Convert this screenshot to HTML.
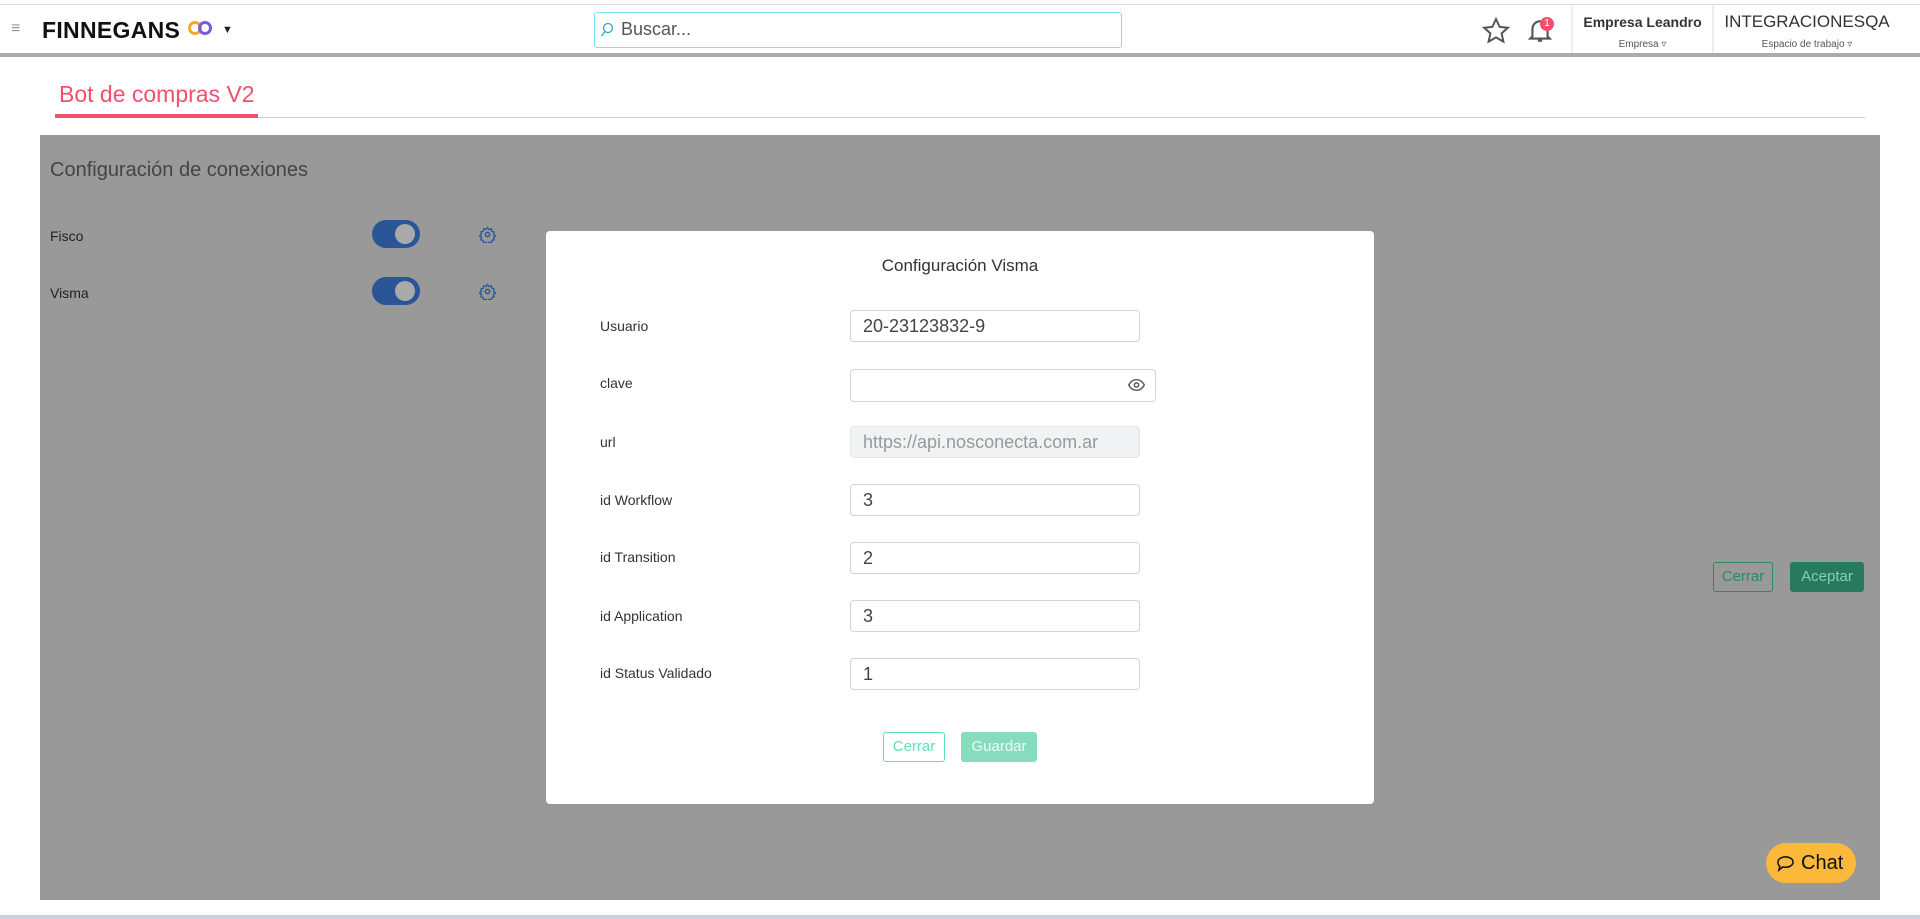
<!DOCTYPE html>
<html><head><meta charset="utf-8"><style>
*{box-sizing:border-box;margin:0;padding:0}
body{width:1920px;height:919px;background:#fff;font-family:"Liberation Sans",sans-serif;position:relative;overflow:hidden;color:#333}
.a{position:absolute}
.lbl{position:absolute;left:600px;font-size:14px;color:#333}
.inp{position:absolute;left:850px;width:290px;height:32px;border:1px solid #cfd3d8;border-radius:4px;background:#fff;font-size:18px;color:#444;padding:4px 12px;line-height:22px}
</style></head><body>
<div class="a" style="left:0;top:4px;width:1920px;height:1px;background:#ddd"></div>
<div class="a" style="left:0;top:53px;width:1920px;height:4px;background:#a9abb0"></div>
<div class="a" style="left:11px;top:20px;font-size:16px;color:#999">≡</div>
<div class="a" style="left:42px;top:17px;font-size:23px;font-weight:bold;color:#111;letter-spacing:0.3px">FINNEGANS</div>
<div class="a" style="left:188px;top:21px;width:14px;height:14px;border:3px solid #f7a531;border-radius:50%"></div>
<div class="a" style="left:198px;top:21px;width:14px;height:14px;border:3px solid #7a5bd6;border-radius:50%"></div>
<div class="a" style="left:222px;top:24px;font-size:11px;color:#222">▼</div>
<div class="a" style="left:594px;top:12px;width:528px;height:36px;border:1px solid #7fdff0;border-radius:3px"></div>
<svg class="a" style="left:600px;top:22px" width="14" height="16" viewBox="0 0 14 16"><circle cx="8" cy="6" r="4.5" fill="none" stroke="#3ab" stroke-width="1.3"/><path d="M5 9.5L1.5 14" stroke="#3ab" stroke-width="1.3"/></svg>
<div class="a" style="left:621px;top:19px;font-size:18px;color:#555">Buscar...</div>
<svg class="a" style="left:1481px;top:16px" width="30" height="30" viewBox="0 0 24 24"><path d="M12 2.5l2.9 6.2 6.6.7-5 4.5 1.4 6.6L12 17.1l-5.9 3.4 1.4-6.6-5-4.5 6.6-.7z" fill="none" stroke="#555" stroke-width="1.6"/></svg>
<svg class="a" style="left:1527px;top:17px" width="26" height="28" viewBox="0 0 24 26"><path d="M5 18V11a7 7 0 0114 0v7l2 2H3z M10 22h4" fill="none" stroke="#555" stroke-width="2"/></svg>
<div class="a" style="left:1540px;top:17px;width:14px;height:14px;border-radius:50%;background:#f0506e;color:#fff;font-size:10px;text-align:center;line-height:14px">1</div>
<div class="a" style="left:1571px;top:5px;width:2px;height:48px;background:#eee"></div>
<div class="a" style="left:1712px;top:5px;width:2px;height:48px;background:#eee"></div>
<div class="a" style="left:1573px;top:14px;width:139px;text-align:center;font-size:14px;font-weight:bold;color:#333">Empresa Leandro</div>
<div class="a" style="left:1573px;top:39px;width:139px;text-align:center;font-size:10px;color:#555">Empresa ▿</div>
<div class="a" style="left:1714px;top:12px;width:186px;text-align:center;font-size:17px;color:#333">INTEGRACIONESQA</div>
<div class="a" style="left:1714px;top:39px;width:186px;text-align:center;font-size:10px;color:#555">Espacio de trabajo ▿</div>
<div class="a" style="left:59px;top:81px;font-size:23px;color:#f0506e">Bot de compras V2</div>
<div class="a" style="left:55px;top:117px;width:1810px;height:1px;background:#ccc"></div>
<div class="a" style="left:55px;top:114px;width:203px;height:4px;background:#f0506e"></div>
<div class="a" style="left:40px;top:135px;width:1840px;height:765px;background:#999"></div>
<div class="a" style="left:50px;top:159px;font-size:20px;color:#444">Configuración de conexiones</div>
<div class="a" style="left:50px;top:228px;font-size:14px;color:#222">Fisco</div>
<div class="a" style="left:50px;top:285px;font-size:14px;color:#222">Visma</div>
<div class="a" style="left:372px;top:220px;width:48px;height:28px;border-radius:14px;background:#2a5597"></div>
<div class="a" style="left:395px;top:224px;width:20px;height:20px;border-radius:50%;background:#aaa"></div>
<div class="a" style="left:372px;top:277px;width:48px;height:28px;border-radius:14px;background:#2a5597"></div>
<div class="a" style="left:395px;top:281px;width:20px;height:20px;border-radius:50%;background:#aaa"></div>
<svg class="a" style="left:479px;top:226px" width="17" height="17" viewBox="0 0 24 24"><circle cx="12" cy="12" r="3" fill="none" stroke="#2a5597" stroke-width="2"/><path d="M12 2l2 3 3.5-1 .5 3.5 3.5 1-1 3.5 3 2-3 2 1 3.5-3.5 1-.5 3.5-3.5-1-2 3-2-3-3.5 1-.5-3.5-3.5-1 1-3.5-3-2 3-2-1-3.5 3.5-1 .5-3.5 3.5 1z" fill="none" stroke="#2a5597" stroke-width="1.8"/></svg>
<svg class="a" style="left:479px;top:283px" width="17" height="17" viewBox="0 0 24 24"><circle cx="12" cy="12" r="3" fill="none" stroke="#2a5597" stroke-width="2"/><path d="M12 2l2 3 3.5-1 .5 3.5 3.5 1-1 3.5 3 2-3 2 1 3.5-3.5 1-.5 3.5-3.5-1-2 3-2-3-3.5 1-.5-3.5-3.5-1 1-3.5-3-2 3-2-1-3.5 3.5-1 .5-3.5 3.5 1z" fill="none" stroke="#2a5597" stroke-width="1.8"/></svg>
<div class="a" style="left:1713px;top:562px;width:60px;height:30px;border:1px solid #2a8a62;border-radius:3px;font-size:15px;color:#2a8a62;text-align:center;line-height:28px">Cerrar</div>
<div class="a" style="left:1790px;top:562px;width:74px;height:30px;background:#287a5c;border-radius:3px;font-size:15px;color:#8cb;text-align:center;line-height:30px">Aceptar</div>
<div class="a" style="left:1766px;top:843px;width:90px;height:40px;background:#fbb83a;border-radius:20px"></div>
<svg class="a" style="left:1776px;top:855px" width="19" height="17" viewBox="0 0 20 18"><path d="M10 2c4.5 0 8 2.5 8 5.5S14.5 13 10 13c-1 0-2-.1-2.8-.4L3 16l1-4C2.8 11 2 9.4 2 7.5 2 4.5 5.5 2 10 2z" fill="none" stroke="#111" stroke-width="1.6"/></svg>
<div class="a" style="left:1801px;top:852px;font-size:20px;color:#111">Chat</div>
<div class="a" style="left:0;top:915px;width:1920px;height:4px;background:#cfcfe0"></div>
<div class="a" style="left:546px;top:231px;width:828px;height:573px;background:#fff;border-radius:4px"></div>
<div class="a" style="left:546px;top:256px;width:828px;text-align:center;font-size:17px;color:#333">Configuración Visma</div>
<div class="lbl" style="top:318px">Usuario</div>
<div class="lbl" style="top:375px">clave</div>
<div class="lbl" style="top:434px">url</div>
<div class="lbl" style="top:492px">id Workflow</div>
<div class="lbl" style="top:549px">id Transition</div>
<div class="lbl" style="top:608px">id Application</div>
<div class="lbl" style="top:665px">id Status Validado</div>
<div class="inp" style="top:310px">20-23123832-9</div>
<div class="inp" style="top:369px;width:306px;height:33px"><svg style="position:absolute;right:10px;top:8px" width="17" height="14" viewBox="0 0 24 18"><path d="M1 9C4 3.5 8 1.5 12 1.5S20 3.5 23 9c-3 5.5-7 7.5-11 7.5S4 14.5 1 9z" fill="none" stroke="#555" stroke-width="2"/><circle cx="12" cy="9" r="3" fill="none" stroke="#555" stroke-width="2"/></svg></div>
<div class="inp" style="top:426px;background:#f1f2f4;color:#999;border-color:#e3e5e8">https://api.nosconecta.com.ar</div>
<div class="inp" style="top:484px">3</div>
<div class="inp" style="top:542px">2</div>
<div class="inp" style="top:600px">3</div>
<div class="inp" style="top:658px">1</div>
<div class="a" style="left:883px;top:732px;width:62px;height:30px;border:1px solid #5ee0b8;border-radius:3px;color:#5ee0b8;font-size:15px;text-align:center;line-height:28px">Cerrar</div>
<div class="a" style="left:961px;top:732px;width:76px;height:30px;background:#86dcbc;border-radius:3px;color:#e8fff5;font-size:15px;text-align:center;line-height:30px">Guardar</div>
</body></html>
